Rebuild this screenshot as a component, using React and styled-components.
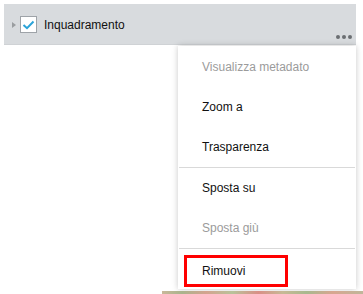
import React from 'react'
import styled, { createGlobalStyle } from 'styled-components'

const GlobalStyle = createGlobalStyle`
  html, body {
    margin: 0;
    padding: 0;
    background: #ffffff;
  }
  body {
    font-family: "Liberation Sans", Arial, sans-serif;
  }
`

const Page = styled.div`
  position: relative;
  width: 363px;
  height: 294px;
  overflow: hidden;
  background: #ffffff;
  padding-top: 4px;
  box-sizing: border-box;
`

const LayerRow = styled.div`
  margin-left: 4px;
  width: 352px;
  height: 41px;
  background: #d8dbde;
  border-bottom: 1px solid #cfd2d5;
  box-sizing: border-box;
  display: flex;
  align-items: center;
  padding: 1px 0 0 8px;
  position: relative;
`

const Caret = styled.span`
  width: 0;
  height: 0;
  border-top: 3.5px solid transparent;
  border-bottom: 3.5px solid transparent;
  border-left: 4px solid #9a9da0;
  margin-right: 4px;
`

const CheckBox = styled.span`
  width: 15px;
  height: 15px;
  border: 1px solid #9ea3a8;
  background: #ffffff;
  display: flex;
  align-items: center;
  justify-content: center;
  margin-right: 7px;
`

const LayerName = styled.span`
  font-size: 12px;
  color: #111111;
`

const MoreButton = styled.span`
  position: absolute;
  right: 4px;
  bottom: 5px;
  display: flex;
  gap: 2px;
`

const Dot = styled.span`
  width: 4px;
  height: 4px;
  border-radius: 50%;
  background: #6b6e72;
`

const Menu = styled.div`
  position: absolute;
  left: 178px;
  top: 46px;
  width: 178px;
  background: #ffffff;
  box-shadow: 0 0 6px rgba(0, 0, 0, 0.22);
  padding-top: 1px;
  display: flex;
  flex-direction: column;
`

const Item = styled.div`
  height: 40px;
  display: flex;
  align-items: center;
  padding-left: 24px;
  font-size: 12px;
  color: ${p => (p.$disabled ? '#9b9b9b' : '#111111')};
`

const Divider = styled.div`
  height: 1px;
  margin: 0 1px;
  background: #d9d9d9;
`

const DangerItem = styled.div`
  height: 40px;
  padding: 6px 0 0 6px;
  box-sizing: border-box;
`

const Highlight = styled.div`
  width: 104px;
  height: 32px;
  box-sizing: border-box;
  border: 3px solid #ff0000;
  display: flex;
  align-items: center;
  padding-left: 15px;
  font-size: 12px;
  color: #111111;
`

const MapStrip = styled.div`
  position: absolute;
  left: 162px;
  right: 0;
  bottom: 0;
  height: 3px;
  background: linear-gradient(90deg, #c9b89a 0%, #a9b48c 10%, #d4a38f 22%, #b8c39a 35%, #d98f86 48%, #c7b995 60%, #a8b98e 72%, #d8a690 85%, #bfb79a 100%);
`

const items = [
  [
    { label: 'Visualizza metadato', disabled: true },
    { label: 'Zoom a' },
    { label: 'Trasparenza' },
  ],
  [
    { label: 'Sposta su' },
    { label: 'Sposta giù', disabled: true },
  ],
]

const App = () => {
  return (
    <Page>
      <GlobalStyle />
      <LayerRow>
        <Caret />
        <CheckBox>
          <svg width="13" height="10" viewBox="0 0 13 10">
            <path d="M1.5 5 L5 8.2 L11.5 1.5" fill="none" stroke="#2aa3d8" strokeWidth="2" />
          </svg>
        </CheckBox>
        <LayerName>Inquadramento</LayerName>
        <MoreButton>
          <Dot />
          <Dot />
          <Dot />
        </MoreButton>
      </LayerRow>
      <Menu>
        {items.map((group, gi) => (
          <React.Fragment key={gi}>
            {group.map(it => (
              <Item key={it.label} $disabled={it.disabled}>{it.label}</Item>
            ))}
            <Divider />
          </React.Fragment>
        ))}
        <DangerItem>
          <Highlight>Rimuovi</Highlight>
        </DangerItem>
      </Menu>
      <MapStrip />
    </Page>
  )
}

export default App
